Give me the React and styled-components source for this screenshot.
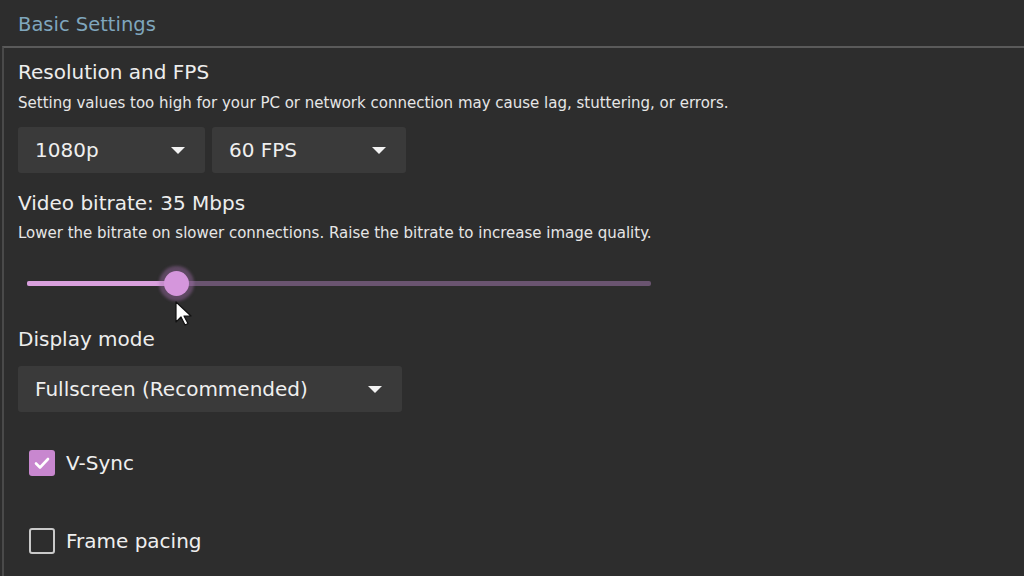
import styled, { createGlobalStyle } from 'styled-components'

const Global = createGlobalStyle`
  html, body {
    margin: 0;
    padding: 0;
    background: #2d2d2d;
    overflow: hidden;
  }
  body {
    font-family: "DejaVu Sans", "Noto Sans", sans-serif;
    color: #ececec;
  }
`

const Page = styled.div`
  width: 1024px;
  height: 576px;
  background: #2d2d2d;
  overflow: hidden;
`

const Heading = styled.div`
  height: 46px;
  padding-left: 18px;
  display: flex;
  align-items: center;
  font-size: 19.5px;
  color: #7fa6bd;
  box-sizing: border-box;
  padding-top: 2px;
`

const Panel = styled.section`
  margin-left: 2px;
  border-top: 2px solid #5a5a5a;
  border-left: 2px solid #4a4a4a;
  padding: 10px 0 0 14px;
  height: 600px;
`

const Title = styled.div`
  font-size: 20px;
  line-height: 28px;
  color: #ededed;
`

const Hint = styled.div`
  font-size: 15px;
  line-height: 20px;
  color: #e6e6e6;
  margin-top: ${p => p.$top ?? 7}px;
`

const Row = styled.div`
  display: flex;
  gap: 7px;
  margin-top: ${p => p.$top || 0}px;
`

const Select = styled.div`
  width: ${p => p.$w}px;
  height: 46px;
  background: #3a3a3a;
  border-radius: 3px;
  display: flex;
  align-items: center;
  justify-content: space-between;
  padding: 0 20px 0 17px;
  box-sizing: border-box;
  font-size: 20px;
  color: #efefef;
`

const Caret = styled.span`
  width: 0;
  height: 0;
  border-left: 7px solid transparent;
  border-right: 7px solid transparent;
  border-top: 7px solid #f2f2f2;
`

const Section = styled.div`
  margin-top: ${p => p.$top || 0}px;
`

const Slider = styled.div`
  position: relative;
  width: 624px;
  height: 30px;
  margin: 25px 0 0 9px;
  display: flex;
  align-items: center;
`

const Track = styled.div`
  width: 100%;
  height: 5px;
  background: #6a5470;
  border-radius: 2px;
`

const Fill = styled.div`
  height: 100%;
  background: #d9a0dd;
  border-radius: 2px;
`

const Thumb = styled.div`
  position: absolute;
  top: 50%;
  width: 25px;
  height: 25px;
  margin: -12.5px 0 0 -12.5px;
  border-radius: 50%;
  background: #d596dc;
  box-shadow: 0 0 3px 5px rgba(170, 115, 180, 0.4);
`

const Pointer = styled.svg`
  position: absolute;
  top: 33px;
  pointer-events: none;
`

const Check = styled.label`
  display: flex;
  align-items: center;
  gap: 11px;
  margin: ${p => p.$top}px 0 0 11px;
  font-size: 20px;
  color: #efefef;
`

const Box = styled.span`
  width: 26px;
  height: 26px;
  box-sizing: border-box;
  border-radius: 3px;
  display: flex;
  align-items: center;
  justify-content: center;
  background: ${p => (p.$on ? '#c887cf' : 'transparent')};
  border: ${p => (p.$on ? 'none' : '2px solid #c9c9c9')};
`

function Checkbox({ on, top, children }) {
  return (
    <Check $top={top}>
      <Box $on={on}>
        {on && (
          <svg width="18" height="18" viewBox="0 0 18 18">
            <path d="M3 9.5l4 4 8-8.5" fill="none" stroke="#fff" strokeWidth="2.6" strokeLinecap="round" strokeLinejoin="round" />
          </svg>
        )}
      </Box>
      {children}
    </Check>
  )
}

export default function App() {
  const pct = 23.9
  return (
    <Page>
      <Global />
      <Heading>Basic Settings</Heading>
      <Panel>
        <Title>Resolution and FPS</Title>
        <Hint>Setting values too high for your PC or network connection may cause lag, stuttering, or errors.</Hint>
        <Row $top={14}>
          <Select $w={187}>1080p<Caret /></Select>
          <Select $w={194}>60 FPS<Caret /></Select>
        </Row>
        <Section $top={16}>
          <Title>Video bitrate: 35 Mbps</Title>
          <Hint $top={6}>Lower the bitrate on slower connections. Raise the bitrate to increase image quality.</Hint>
        </Section>
        <Slider>
          <Track><Fill style={{ width: `${pct}%` }} /></Track>
          <Thumb style={{ left: `${pct}%` }} />
          <Pointer style={{ left: `calc(${pct}% - 1px)` }} width="18" height="26" viewBox="0 0 18 26">
            <path d="M1 1v20l5-5 4 8 3-1.5-4-7.5h7z" fill="#fff" stroke="#111" strokeWidth="1.2" strokeLinejoin="round" />
          </Pointer>
        </Slider>
        <Section $top={27}>
          <Title>Display mode</Title>
        </Section>
        <Row $top={13}>
          <Select $w={384}>Fullscreen (Recommended)<Caret /></Select>
        </Row>
        <Checkbox on top={38}>V-Sync</Checkbox>
        <Checkbox top={52}>Frame pacing</Checkbox>
      </Panel>
    </Page>
  )
}
